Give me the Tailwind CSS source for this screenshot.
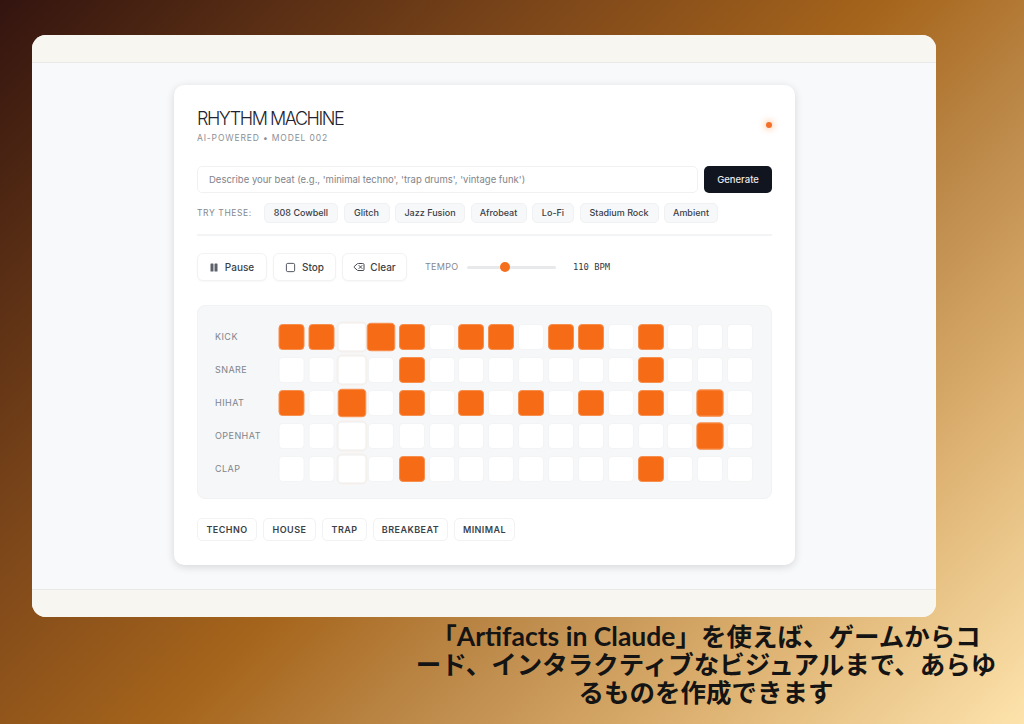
<!DOCTYPE html>
<html lang="ja">
<head>
    <meta charset="UTF-8">
    <title>Rhythm Machine</title>
    <script src="https://cdn.jsdelivr.net/npm/@tailwindcss/browser@4"></script>
</head>
<body class="w-[1024px] h-[724px] overflow-hidden bg-[linear-gradient(135deg,#33140f_0%,#80491a_33%,#a6651c_51%,#bd8a4a_65%,#dcb070_80%,#fde3ac_100%)] font-['Inter',sans-serif]">

    <div class="pt-[35px] pl-[32px]">
        <!-- window -->
        <div class="w-[904px] h-[582px] rounded-[14px] overflow-hidden bg-[#f8f9fb] flex flex-col">
            <div class="h-[28px] shrink-0 bg-[#f8f6f0] border-b border-[#e9e9ea]"></div>

            <div class="flex-1 pt-[22px] pl-[142px]">
                <!-- card -->
                <div class="w-[621px] h-[480px] bg-white rounded-[10px] shadow-[0_2px_8px_rgba(0,0,0,0.14)] px-[23px] pt-[24px]">
                    <div class="flex justify-between items-start h-[57px]">
                        <div>
                            <h1 class="text-[18px] leading-[20px] font-light tracking-[-0.08em] text-[#1f2430]">RHYTHM MACHINE</h1>
                            <p class="mt-[4px] text-[8.5px] leading-[11px] tracking-[0.1em] text-[#8b8f97]">AI-POWERED • MODEL 002</p>
                        </div>
                        <div class="mt-[13px] w-[6px] h-[6px] rounded-full bg-[#f4702a] shadow-[0_0_6px_2px_rgba(249,115,22,0.3)]"></div>
                    </div>

                    <div class="flex gap-[6px]">
                        <div class="w-[501px] h-[27px] flex items-center pl-[11px] pt-[2px] bg-white border border-[#f0f1f3] rounded-[5px] text-[9.5px] text-[#7f838b]">Describe your beat (e.g., 'minimal techno', 'trap drums', 'vintage funk')</div>
                        <button class="w-[68px] h-[27px] pt-[2px] bg-[#111520] rounded-[5px] text-[9.5px] font-medium text-[#e9eaec]">Generate</button>
                    </div>

                    <div class="flex items-center mt-[10px] h-[20px]">
                        <span class="w-[67px] text-[8.5px] tracking-[0.07em] text-[#85888f]">TRY THESE:</span>
                        <div class="flex gap-[5.5px] text-[9px] font-medium text-[#3b4048]">
                            <span class="w-[74px] h-[20px] flex items-center justify-center bg-[#f7f8f9] border border-[#f0f1f3] rounded-[5px]">808 Cowbell</span>
                            <span class="w-[46px] h-[20px] flex items-center justify-center bg-[#f7f8f9] border border-[#f0f1f3] rounded-[5px]">Glitch</span>
                            <span class="w-[70px] h-[20px] flex items-center justify-center bg-[#f7f8f9] border border-[#f0f1f3] rounded-[5px]">Jazz Fusion</span>
                            <span class="w-[56px] h-[20px] flex items-center justify-center bg-[#f7f8f9] border border-[#f0f1f3] rounded-[5px]">Afrobeat</span>
                            <span class="w-[42px] h-[20px] flex items-center justify-center bg-[#f7f8f9] border border-[#f0f1f3] rounded-[5px]">Lo-Fi</span>
                            <span class="w-[79px] h-[20px] flex items-center justify-center bg-[#f7f8f9] border border-[#f0f1f3] rounded-[5px]">Stadium Rock</span>
                            <span class="w-[54px] h-[20px] flex items-center justify-center bg-[#f7f8f9] border border-[#f0f1f3] rounded-[5px]">Ambient</span>
                        </div>
                    </div>

                    <div class="mt-[11px] border-t-2 border-[#f3f4f5]"></div>

                    <!-- transport -->
                    <div class="flex items-center mt-[17px] h-[28px] text-[10px] font-medium text-[#3b3f47]">
                        <button class="w-[70px] h-[28px] flex items-center justify-center gap-[7px] bg-white border border-[#f1f2f3] rounded-[6px] shadow-[0_1px_2px_rgba(0,0,0,0.03)]">
                            <svg class="w-[8px] h-[9px]" viewBox="0 0 8 9" fill="#5c6068"><rect x="0.5" y="0.5" width="3" height="8" rx="0.6"/><rect x="4.5" y="0.5" width="3" height="8" rx="0.6"/></svg>
                            Pause
                        </button>
                        <button class="ml-[6px] w-[63px] h-[28px] flex items-center justify-center gap-[6px] bg-white border border-[#f1f2f3] rounded-[6px] shadow-[0_1px_2px_rgba(0,0,0,0.03)]">
                            <svg class="w-[11px] h-[11px]" viewBox="0 0 24 24" fill="none" stroke="#444850" stroke-width="2"><rect x="3" y="3" width="18" height="18" rx="3"/></svg>
                            Stop
                        </button>
                        <button class="ml-[6px] w-[65px] h-[28px] flex items-center justify-center gap-[5px] bg-white border border-[#f1f2f3] rounded-[6px] shadow-[0_1px_2px_rgba(0,0,0,0.03)]">
                            <svg class="w-[12px] h-[12px]" viewBox="0 0 24 24" fill="none" stroke="#444850" stroke-width="2" stroke-linecap="round" stroke-linejoin="round"><path d="M10 5a2 2 0 0 0-1.344.519l-6.328 5.74a1 1 0 0 0 0 1.481l6.328 5.741A2 2 0 0 0 10 19h10a2 2 0 0 0 2-2V7a2 2 0 0 0-2-2z"/><path d="m12 9 6 6"/><path d="m18 9-6 6"/></svg>
                            Clear
                        </button>
                        <span class="ml-[18px] w-[42px] text-[9px] font-normal tracking-[0.03em] text-[#85888f]">TEMPO</span>
                        <div class="relative w-[89px] h-[3px] rounded-full bg-[#e8e9eb]">
                            <div class="absolute left-[33px] top-[-3.5px] w-[10px] h-[10px] rounded-full bg-[#f4701f]"></div>
                        </div>
                        <span class="ml-[17px] pt-[1px] text-[8.8px] font-medium font-['DejaVu_Sans_Mono',monospace] text-[#33373f]">110 BPM</span>
                    </div>

                    <!-- sequencer -->
                    <div class="mt-[24px] w-[575px] h-[194px] bg-[#f6f7f8] border border-[#f1f2f3] rounded-[8px] pt-[18px] pl-[17px] flex flex-col gap-[7px]" id="grid"></div>

                    <div class="flex gap-[6px] mt-[19px] text-[9px] font-semibold tracking-[0.05em] text-[#3b3f47]">
                        <span class="w-[60px] h-[23px] flex items-center justify-center bg-white border border-[#f1f2f3] rounded-[5px]">TECHNO</span>
                        <span class="w-[53px] h-[23px] flex items-center justify-center bg-white border border-[#f1f2f3] rounded-[5px]">HOUSE</span>
                        <span class="w-[45px] h-[23px] flex items-center justify-center bg-white border border-[#f1f2f3] rounded-[5px]">TRAP</span>
                        <span class="w-[75px] h-[23px] flex items-center justify-center bg-white border border-[#f1f2f3] rounded-[5px]">BREAKBEAT</span>
                        <span class="w-[61px] h-[23px] flex items-center justify-center bg-white border border-[#f1f2f3] rounded-[5px]">MINIMAL</span>
                    </div>
                </div>
            </div>

            <div class="h-[28px] shrink-0 bg-[#f8f6f0] border-t border-[#e9e9ea]"></div>
        </div>
    </div>

    <p class="mt-[5px] ml-[406px] w-[600px] text-center text-[25.5px] leading-[28px] font-bold text-[#141414] font-['Lato','Noto_Sans_CJK_JP',sans-serif]">「<span class="text-[26.5px]">Artifacts in Claude</span>」を使えば、ゲームからコ<br>ード、インタラクティブなビジュアルまで、あらゆ<br>るものを作成できます</p>

    <script>
        // 16 steps per track, on-steps only
        const tracks = [
            ['KICK', [0, 1, 3, 4, 6, 7, 9, 10, 12]],
            ['SNARE', [4, 12]],
            ['HIHAT', [0, 2, 4, 6, 8, 10, 12, 14]],
            ['OPENHAT', [14]],
            ['CLAP', [4, 12]],
        ];
        const grid = document.getElementById('grid');
        tracks.forEach(([name, steps], row) => {
            let cells = '';
            for (let i = 0; i < 16; i++) {
                const on = steps.includes(i);
                let cls = on
                    ? 'bg-[#f66b15] border-[#f78f4f]'
                    : 'bg-white border-[#f3f4f5]';
                // the columns in the shot are not quite evenly spaced
                if (i < 2) cls += ' -translate-x-[1.5px]';
                else if (i === 2 || i === 3 || i === 6 || i === 7) cls += ' -translate-x-[1px]';
                // playing column, and the pads that were just hit
                if (i === 2) cls += on ? ' scale-110' : ' scale-110 border-[#f3e0da] shadow-[0_0_0_1px_rgba(249,115,22,0.06)]';
                if (row === 0 && i === 3) cls += ' scale-110';
                if (on && i === 14) cls += ' scale-105';
                cells += `<div class="w-[26px] h-[26px] shrink-0 rounded-[4px] border ${cls}"></div>`;
            }
            grid.innerHTML += `<div class="flex items-center h-[26px]">
                <span class="w-[65px] text-[9px] tracking-[0.05em] text-[#80848b]">${name}</span>
                <div class="flex gap-[3.8px]">${cells}</div>
            </div>`;
        });
    </script>
</body>
</html>
